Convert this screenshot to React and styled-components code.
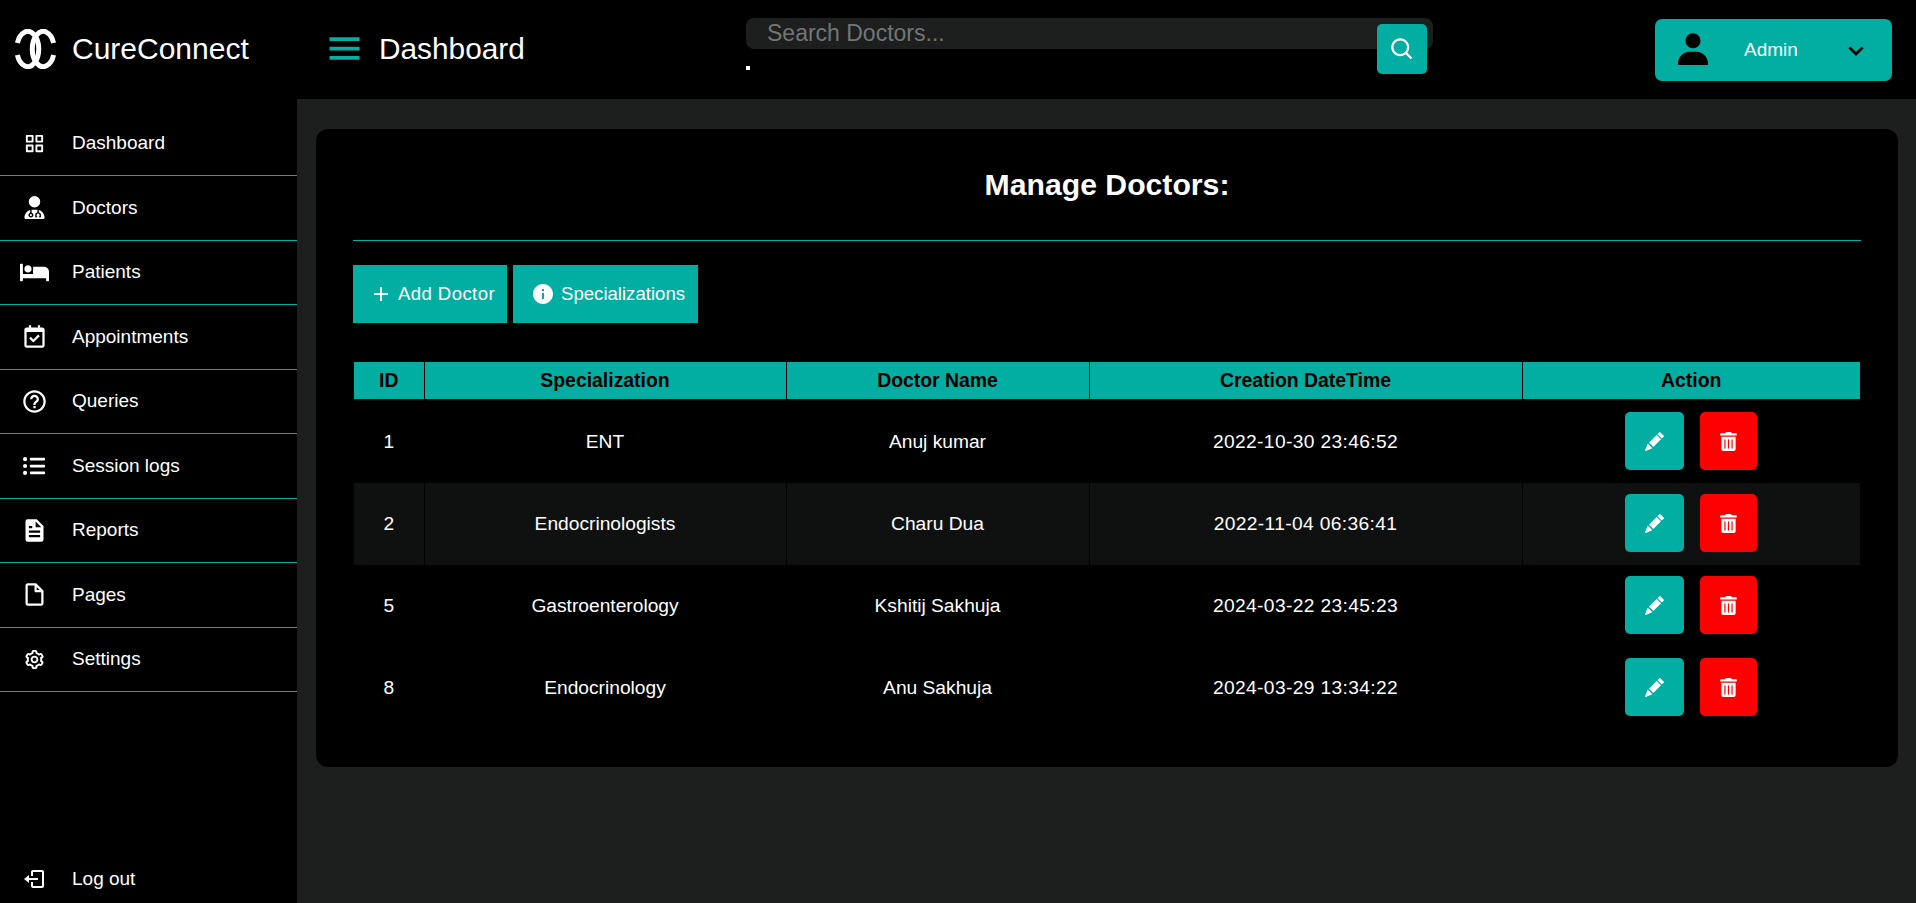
import React from "react";
import styled, { createGlobalStyle } from "styled-components";
import {
  BiGridAlt,
  BiHelpCircle,
  BiFileBlank,
  BiCog,
  BiLogOut,
  BiMenu,
  BiSearch,
  BiSolidUser,
  BiChevronDown,
  BiPlus,
  BiSolidInfoCircle,
  BiSolidFile,
  BiCalendarCheck,
} from "react-icons/bi";
import { BsPencilFill } from "react-icons/bs";
import { FaBed, FaListUl, FaTrashAlt } from "react-icons/fa";
import { FaUserDoctor } from "react-icons/fa6";

const TEAL = "#02ada1";

const GlobalStyle = createGlobalStyle`
  html, body {
    margin: 0;
    height: 100%;
    overflow: hidden;
    background: #000;
    font-family: "Liberation Sans", Arial, sans-serif;
  }
  * { box-sizing: border-box; }
`;

const Page = styled.div`
  display: flex;
  flex-direction: column;
  height: 903px;
  color: #fff;
`;

const Topbar = styled.header`
  display: flex;
  align-items: center;
  height: 99px;
  flex-shrink: 0;
  background: #000;
`;

const Brand = styled.div`
  display: flex;
  align-items: center;
  gap: 14px;
  width: 297px;
  padding: 0 0 2px 13px;
  font-size: 30px;
`;

const TitleBlock = styled.div`
  display: flex;
  align-items: center;
  gap: 12px;
  width: 449px;
  padding: 0 0 2px 25px;
  font-size: 29.8px;
  svg {
    color: ${TEAL};
  }
`;

const SearchForm = styled.form`
  position: relative;
  align-self: flex-start;
  width: 687px;
  height: 31px;
  margin-top: 18px;
`;

const SearchInput = styled.input`
  display: block;
  width: 100%;
  height: 100%;
  padding: 0 21px;
  border: none;
  border-radius: 8px;
  outline: none;
  background: #1c1f1e;
  color: #fff;
  font-family: inherit;
  font-size: 23px;
  &::placeholder {
    color: #737575;
    opacity: 1;
  }
`;

const SearchButton = styled.button`
  position: absolute;
  top: 6px;
  left: 631px;
  display: flex;
  align-items: center;
  justify-content: center;
  width: 50px;
  height: 50px;
  padding: 0;
  border: none;
  border-radius: 5px;
  background: ${TEAL};
  color: #fff;
`;

const Dot = styled.span`
  position: absolute;
  top: 48px;
  left: 0;
  width: 4px;
  height: 4px;
  background: #fff;
`;

const AdminButton = styled.div`
  display: flex;
  align-items: center;
  width: 237px;
  height: 62px;
  margin-left: auto;
  margin-right: 24px;
  padding: 0 20px 0 18px;
  border-radius: 7px;
  background: ${TEAL};
  font-size: 19px;
  svg {
    color: #000;
    flex-shrink: 0;
  }
`;

const AdminName = styled.span`
  flex: 1;
  padding-left: 31px;
`;

const Body = styled.div`
  display: flex;
  flex: 1;
  min-height: 0;
`;

const Sidebar = styled.nav`
  display: flex;
  flex-direction: column;
  width: 297px;
  flex-shrink: 0;
  padding-top: 12.5px;
  background: #000;
`;

const NavRow = styled.div`
  display: flex;
  align-items: center;
  height: 64.5px;
  border-bottom: 1px solid ${TEAL};
  font-size: 19px;
`;

const LogoutRow = styled(NavRow)`
  height: 48px;
  margin-top: auto;
  border-bottom: none;
`;

const NavIcon = styled.span`
  display: flex;
  align-items: center;
  justify-content: center;
  width: 56px;
  margin: 0 10px 0 6px;
`;

const Main = styled.main`
  flex: 1;
  padding: 30px 18px 0 19px;
  background: #1c1f1e;
`;

const Card = styled.section`
  height: 638px;
  padding: 0 37px;
  border-radius: 12px;
  background: #000;
`;

const CardTitle = styled.h2`
  display: flex;
  align-items: center;
  justify-content: center;
  height: 112px;
  margin: 0;
  border-bottom: 1px solid ${TEAL};
  font-size: 30.2px;
  font-weight: 700;
`;

const Toolbar = styled.div`
  display: flex;
  gap: 6px;
  margin-top: 24px;
`;

const ToolButton = styled.button`
  display: flex;
  align-items: center;
  gap: ${(p) => p.$gap}px;
  width: ${(p) => p.$width}px;
  height: 58px;
  padding: 0 0 0 ${(p) => p.$left}px;
  border: none;
  background: ${TEAL};
  color: #fff;
  font-family: inherit;
  font-size: 18.6px;
  letter-spacing: ${(p) => p.$spacing || 0}px;
  white-space: nowrap;
`;

const Table = styled.table`
  width: 1506px;
  margin: 39px 0 0 1px;
  border-collapse: collapse;
  table-layout: fixed;
  text-align: center;
`;

const HeadCell = styled.th`
  height: 38px;
  padding: 0;
  background: ${TEAL};
  border-left: 1px solid #000;
  border-bottom: 2px solid #000;
  color: #000;
  font-size: 19.4px;
  font-weight: 700;
  &:first-child {
    border-left: none;
  }
`;

const Row = styled.tr`
  background: ${(p) => (p.$striped ? "#0f1110" : "#000")};
`;

const Cell = styled.td`
  height: 82px;
  padding: 0;
  border-left: 1px solid #000;
  color: #fff;
  font-size: 19.2px;
  &:first-child {
    border-left: none;
  }
`;

const DateCell = styled(Cell)`
  letter-spacing: 0.36px;
`;

const ActionCell = styled(Cell)`
  padding: 11px 0 13px;
  vertical-align: top;
`;

const Actions = styled.div`
  display: flex;
  justify-content: center;
  gap: 16px;
`;

const ActionButton = styled.button`
  display: flex;
  align-items: center;
  justify-content: center;
  width: ${(p) => p.$width}px;
  height: 58px;
  padding: 0;
  border: none;
  border-radius: 5px;
  background: ${(p) => p.$bg};
  color: #fff;
`;

// interlocked rings, open on the outer side
const Logo = () => (
  <svg width="45" height="40" viewBox="0 0 45 40" fill="none" stroke="#fff" strokeWidth="5">
    <path d="M4.4 14 A11 17.6 0 1 1 4.4 26" />
    <path d="M40.6 14 A11 17.6 0 1 0 40.6 26" />
  </svg>
);

const navItems = [
  { label: "Dashboard", icon: <BiGridAlt size={23} /> },
  { label: "Doctors", icon: <FaUserDoctor size={23} /> },
  { label: "Patients", icon: <FaBed size={29} /> },
  { label: "Appointments", icon: <BiCalendarCheck size={27} /> },
  { label: "Queries", icon: <BiHelpCircle size={27} /> },
  { label: "Session logs", icon: <FaListUl size={22} /> },
  { label: "Reports", icon: <BiSolidFile size={27} /> },
  { label: "Pages", icon: <BiFileBlank size={27} /> },
  { label: "Settings", icon: <BiCog size={23} /> },
];

const columns = [
  { title: "ID", width: 70 },
  { title: "Specialization", width: 362 },
  { title: "Doctor Name", width: 303 },
  { title: "Creation DateTime", width: 433 },
  { title: "Action", width: 338 },
];

const doctors = [
  { id: 1, specialization: "ENT", name: "Anuj kumar", created: "2022-10-30 23:46:52" },
  { id: 2, specialization: "Endocrinologists", name: "Charu Dua", created: "2022-11-04 06:36:41", striped: true },
  { id: 5, specialization: "Gastroenterology", name: "Kshitij Sakhuja", created: "2024-03-22 23:45:23" },
  { id: 8, specialization: "Endocrinology", name: "Anu Sakhuja", created: "2024-03-29 13:34:22" },
];

const App = () => {
  return (
    <Page>
      <GlobalStyle />
      <Topbar>
        <Brand>
          <Logo />
          <span>CureConnect</span>
        </Brand>
        <TitleBlock>
          <BiMenu size={45} />
          <span>Dashboard</span>
        </TitleBlock>
        <SearchForm>
          <SearchInput placeholder="Search Doctors..." />
          <SearchButton type="button">
            <BiSearch size={27} />
          </SearchButton>
          <Dot />
        </SearchForm>
        <AdminButton>
          <BiSolidUser size={40} />
          <AdminName>Admin</AdminName>
          <BiChevronDown size={32} />
        </AdminButton>
      </Topbar>
      <Body>
        <Sidebar>
          {navItems.map((item) => (
            <NavRow key={item.label}>
              <NavIcon>{item.icon}</NavIcon>
              {item.label}
            </NavRow>
          ))}
          <LogoutRow>
            <NavIcon>
              <BiLogOut size={24} />
            </NavIcon>
            Log out
          </LogoutRow>
        </Sidebar>
        <Main>
          <Card>
            <CardTitle>Manage Doctors:</CardTitle>
            <Toolbar>
              <ToolButton $left={16} $gap={5} $width={154} $spacing={0.4}>
                <BiPlus size={24} />
                Add Doctor
              </ToolButton>
              <ToolButton $left={18} $gap={6} $width={185}>
                <BiSolidInfoCircle size={24} />
                Specializations
              </ToolButton>
            </Toolbar>
            <Table>
              <colgroup>
                {columns.map((c) => (
                  <col key={c.title} width={c.width} />
                ))}
              </colgroup>
              <thead>
                <tr>
                  {columns.map((c) => (
                    <HeadCell key={c.title}>{c.title}</HeadCell>
                  ))}
                </tr>
              </thead>
              <tbody>
                {doctors.map((d) => (
                  <Row key={d.id} $striped={d.striped}>
                    <Cell>{d.id}</Cell>
                    <Cell>{d.specialization}</Cell>
                    <Cell>{d.name}</Cell>
                    <DateCell>{d.created}</DateCell>
                    <ActionCell>
                      <Actions>
                        <ActionButton $bg={TEAL} $width={59}>
                          <BsPencilFill size={19} />
                        </ActionButton>
                        <ActionButton $bg="#ff0000" $width={57}>
                          <FaTrashAlt size={19} />
                        </ActionButton>
                      </Actions>
                    </ActionCell>
                  </Row>
                ))}
              </tbody>
            </Table>
          </Card>
        </Main>
      </Body>
    </Page>
  );
};

export default App;
